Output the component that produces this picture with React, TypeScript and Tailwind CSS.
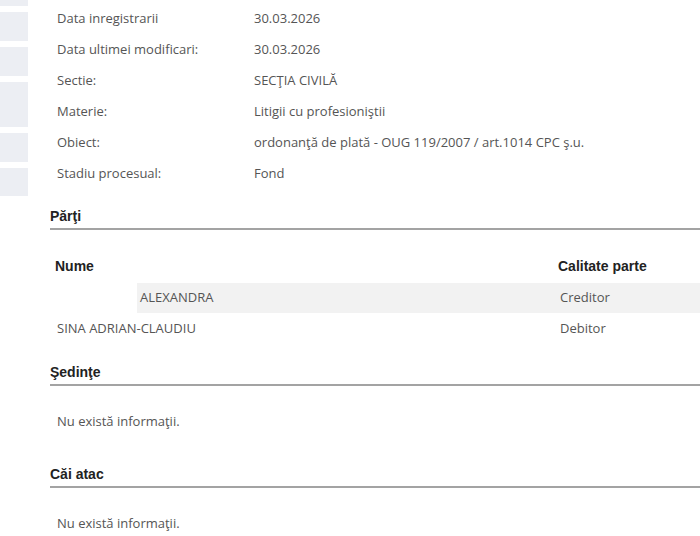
import React from 'react';

const details: [string, string][] = [
    ['Data inregistrarii', '30.03.2026'],
    ['Data ultimei modificari:', '30.03.2026'],
    ['Sectie:', 'SECŢIA CIVILĂ'],
    ['Materie:', 'Litigii cu profesioniştii'],
    ['Obiect:', 'ordonanţă de plată - OUG 119/2007 / art.1014 CPC ş.u.'],
    ['Stadiu procesual:', 'Fond'],
];

const sideBlocks = ['h-[6px]', 'h-[29px]', 'h-[29px]', 'h-[45px]', 'h-[29px]', 'h-[28px]'];

const SectionTitle: React.FC<{ title: string }> = ({ title }) => (
    <div className="border-b-2 border-[#a3a3a3] pb-[4px] font-['Liberation_Sans',Arial,sans-serif] text-[14px] leading-[16px] font-bold text-[#222]">
        {title}
    </div>
);

export default function App() {
    return (
        <div className="flex h-[536px] w-[700px] overflow-hidden bg-white">
            {/* left rail */}
            <div className="flex w-[28px] shrink-0 flex-col gap-[6px]">
                {sideBlocks.map((h, i) => (
                    <div key={i} className={`${h} w-full bg-[#eceef3]`} />
                ))}
            </div>

            <div className="flex-1 pl-[22px]">
                {/* case details */}
                <div className="flex flex-col pl-[7px] pt-[3px] font-['Open_Sans',sans-serif] text-[13px] text-[#555]">
                    {details.map(([label, value]) => (
                        <div key={label} className="flex h-[31px] items-center">
                            <div className="w-[197px] shrink-0">{label}</div>
                            <div>{value}</div>
                        </div>
                    ))}
                </div>

                {/* parti */}
                <div className="mt-[19px]">
                    <SectionTitle title="Părţi" />
                    <div className="mt-[25px] font-['Liberation_Sans',Arial,sans-serif] text-[13px]">
                        <div className="flex h-[22px] items-center text-[14px] font-bold text-[#222]">
                            <div className="flex-1 pl-[5px]">Nume</div>
                            <div className="w-[142px]">Calitate parte</div>
                        </div>
                        <div className="mt-[6px] flex h-[30px] items-center bg-[#f2f2f2] font-['Open_Sans',sans-serif] text-[#555]">
                            <div className="flex flex-1 items-center self-stretch">
                                <div className="w-[87px] self-stretch bg-white" />
                                <span className="pl-[3px]">ALEXANDRA</span>
                            </div>
                            <div className="w-[140px]">Creditor</div>
                        </div>
                        <div className="flex h-[31px] items-center font-['Open_Sans',sans-serif] text-[#555]">
                            <div className="flex-1 pl-[7px]">SINA ADRIAN-CLAUDIU</div>
                            <div className="w-[140px]">Debitor</div>
                        </div>
                    </div>
                </div>

                {/* sedinte */}
                <div className="mt-[20px]">
                    <SectionTitle title="Şedinţe" />
                    <div className="pl-[7px] pt-[26px] font-['Open_Sans',sans-serif] text-[13px] leading-[18px] text-[#555]">
                        Nu există informaţii.
                    </div>
                </div>

                {/* cai atac */}
                <div className="mt-[36px]">
                    <SectionTitle title="Căi atac" />
                    <div className="pl-[7px] pt-[26px] font-['Open_Sans',sans-serif] text-[13px] leading-[18px] text-[#555]">
                        Nu există informaţii.
                    </div>
                </div>
            </div>
        </div>
    );
}
